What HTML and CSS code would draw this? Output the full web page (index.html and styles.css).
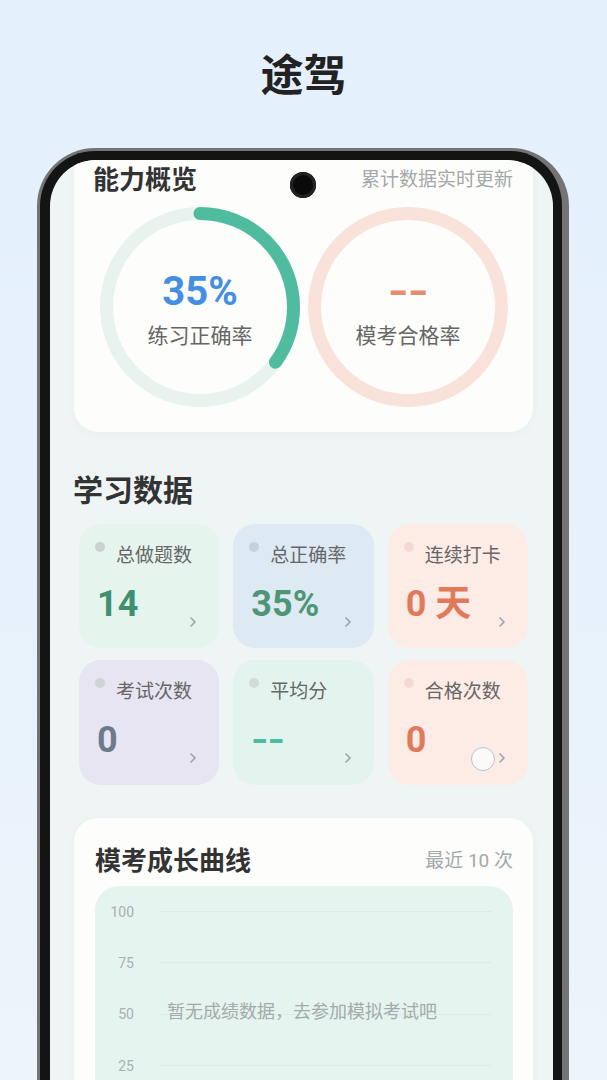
FILE: index.html
```html
<!DOCTYPE html>
<html lang="zh-CN">
<head>
<meta charset="utf-8">
<title>途驾</title>
<link rel="stylesheet" href="styles.css">
</head>
<body>
<header class="brand"><h1>途驾</h1></header>
<div class="phone">
  <div class="screen">
    <div class="camera"></div>
    <div class="content">
      <section class="card ability">
        <div class="card-head">
          <h2>能力概览</h2>
          <span class="hint">累计数据实时更新</span>
        </div>
        <div class="rings">
          <div class="ring">
            <svg viewBox="0 0 200 200" width="200" height="200">
              <circle cx="100" cy="100" r="93.5" fill="none" stroke="#e8f2ee" stroke-width="13"/>
              <circle cx="100" cy="100" r="93.5" fill="none" stroke="#4fbc9f" stroke-width="13" stroke-linecap="round" stroke-dasharray="205.6 600" transform="rotate(-90 100 100)"/>
            </svg>
            <div class="ring-text">
              <div class="ring-val blue">35%</div>
              <div class="ring-label">练习正确率</div>
            </div>
          </div>
          <div class="ring">
            <svg viewBox="0 0 200 200" width="200" height="200">
              <circle cx="100" cy="100" r="93.5" fill="none" stroke="#f8e2da" stroke-width="13"/>
            </svg>
            <div class="ring-text">
              <div class="ring-val orange dash">--</div>
              <div class="ring-label">模考合格率</div>
            </div>
          </div>
        </div>
      </section>

      <h2 class="section-title">学习数据</h2>
      <div class="stats">
        <div class="stat s-green">
          <div class="stat-head"><span class="dot"></span><span class="stat-label">总做题数</span></div>
          <div class="stat-row"><span class="stat-val v-green">14</span><svg class="chev" viewBox="0 0 8 12" width="8" height="12"><polyline points="2,2 6,6 2,10" fill="none" stroke="#9aa3a8" stroke-width="1.6" stroke-linecap="round" stroke-linejoin="round"/></svg></div>
        </div>
        <div class="stat s-blue">
          <div class="stat-head"><span class="dot"></span><span class="stat-label">总正确率</span></div>
          <div class="stat-row"><span class="stat-val v-green2">35%</span><svg class="chev" viewBox="0 0 8 12" width="8" height="12"><polyline points="2,2 6,6 2,10" fill="none" stroke="#9aa3a8" stroke-width="1.6" stroke-linecap="round" stroke-linejoin="round"/></svg></div>
        </div>
        <div class="stat s-peach">
          <div class="stat-head"><span class="dot"></span><span class="stat-label">连续打卡</span></div>
          <div class="stat-row"><span class="stat-val v-orange">0 天</span><svg class="chev" viewBox="0 0 8 12" width="8" height="12"><polyline points="2,2 6,6 2,10" fill="none" stroke="#9aa3a8" stroke-width="1.6" stroke-linecap="round" stroke-linejoin="round"/></svg></div>
        </div>
        <div class="stat s-lav">
          <div class="stat-head"><span class="dot"></span><span class="stat-label">考试次数</span></div>
          <div class="stat-row"><span class="stat-val v-slate">0</span><svg class="chev" viewBox="0 0 8 12" width="8" height="12"><polyline points="2,2 6,6 2,10" fill="none" stroke="#9aa3a8" stroke-width="1.6" stroke-linecap="round" stroke-linejoin="round"/></svg></div>
        </div>
        <div class="stat s-mint">
          <div class="stat-head"><span class="dot"></span><span class="stat-label">平均分</span></div>
          <div class="stat-row"><span class="stat-val v-teal dash-sm">--</span><svg class="chev" viewBox="0 0 8 12" width="8" height="12"><polyline points="2,2 6,6 2,10" fill="none" stroke="#9aa3a8" stroke-width="1.6" stroke-linecap="round" stroke-linejoin="round"/></svg></div>
        </div>
        <div class="stat s-peach">
          <div class="stat-head"><span class="dot"></span><span class="stat-label">合格次数</span></div>
          <div class="stat-row"><span class="stat-val v-orange">0</span><span class="bubble"></span><svg class="chev" viewBox="0 0 8 12" width="8" height="12"><polyline points="2,2 6,6 2,10" fill="none" stroke="#9aa3a8" stroke-width="1.6" stroke-linecap="round" stroke-linejoin="round"/></svg></div>
        </div>
      </div>

      <section class="card chart-card">
        <div class="card-head">
          <h2>模考成长曲线</h2>
          <span class="hint">最近 10 次</span>
        </div>
        <div class="chart">
          <div class="grid-rows">
            <div class="g-row"><span class="y">100</span><span class="g-line"></span></div>
            <div class="g-row"><span class="y">75</span><span class="g-line"></span></div>
            <div class="g-row"><span class="y">50</span><span class="g-line"></span></div>
            <div class="g-row"><span class="y">25</span><span class="g-line"></span></div>
          </div>
          <div class="empty">暂无成绩数据，去参加模拟考试吧</div>
        </div>
      </section>
    </div>
  </div>
</div>
</body>
</html>
```

FILE: styles.css
```css
* { box-sizing: border-box; }
html, body {
  margin: 0;
  height: 1080px;
  overflow: hidden;
}
body {
  background: linear-gradient(180deg, #e4f0fc 0%, #e8f2fb 60%, #edf4fa 100%);
  font-family: Roboto, "Noto Sans CJK SC", sans-serif;
  color: #333;
}
.brand {
  height: 148px;
  display: flex;
  align-items: center;
  justify-content: center;
  padding-bottom: 4px;
}
.brand h1 {
  margin: 0;
  font-family: "Noto Sans CJK SC", sans-serif;
  font-size: 43px;
  font-weight: 700;
  color: #222;
}
.phone {
  margin-left: 37px;
  width: 532px;
  height: 1000px;
  background: #141414;
  border: 3px solid #747474;
  border-right-width: 7px;
  border-bottom: none;
  border-radius: 58px 58px 0 0;
  padding: 9px 9px 0 10px;
}
.screen {
  position: relative;
  width: 503px;
  height: 960px;
  background: #eff5f4;
  border-radius: 46px 46px 0 0;
  overflow: hidden;
}
.camera {
  position: absolute;
  left: 240px;
  top: 12px;
  width: 26px;
  height: 26px;
  border-radius: 50%;
  background: #0a0a0a;
  box-shadow: inset 0 0 0 3px #222;
  z-index: 3;
}
.content {
  padding: 0 20px 0 24px;
}
.card {
  background: #fdfdfc;
  border-radius: 24px;
  box-shadow: 0 2px 8px rgba(120, 150, 150, 0.06);
}
.ability {
  margin-top: -14px;
  padding: 16px 20px 25px 26px;
}
.card-head {
  display: flex;
  align-items: center;
  justify-content: space-between;
  height: 30px;
}
.card-head h2 {
  margin: 0;
  font-family: "Noto Sans CJK SC", sans-serif;
  font-size: 26px;
  font-weight: 700;
  color: #333;
}
.ability .card-head h2 { margin-left: -7px; }
.ability .rings { margin-top: 15px; }
.hint {
  font-size: 19px;
  color: #a3a8a9;
}
.rings {
  display: flex;
  gap: 8px;
}
.ring {
  display: grid;
  width: 200px;
  height: 200px;
}
.ring > * { grid-area: 1 / 1; }
.ring-text {
  display: flex;
  flex-direction: column;
  align-items: center;
  justify-content: center;
  gap: 9px;
  padding-top: 4px;
}
.ring-val {
  font-size: 40px;
  font-weight: 700;
  line-height: 44px;
}
.ring-val.dash {
  letter-spacing: -1px;
  transform: scaleX(1.35);
}
.blue { color: #458fe2; }
.orange { color: #e58c70; }
.ring-label {
  font-size: 21px;
  line-height: 26px;
  color: #666;
}
.section-title {
  margin: 38px 0 0 -1px;
  font-family: "Noto Sans CJK SC", sans-serif;
  font-size: 30px;
  line-height: 36px;
  font-weight: 700;
  color: #333;
}
.stats {
  display: grid;
  grid-template-columns: repeat(3, 1fr);
  column-gap: 14px;
  row-gap: 12px;
  margin: 18px 5px 0 5px;
}
.stat {
  height: 124px;
  border-radius: 22px;
  padding: 18px 0 0 16px;
  display: flex;
  flex-direction: column;
}
.stats .stat:nth-child(n+4) { height: 125px; }
.s-green { background: #e5f5ee; }
.s-blue { background: #dde9f3; }
.s-peach { background: #fdece6; }
.s-lav { background: #e7e5f2; }
.s-mint { background: #e3f4ee; }
.stat-head {
  display: flex;
  align-items: flex-start;
}
.dot {
  width: 10px;
  height: 10px;
  border-radius: 50%;
  background: #cbd1cf;
  flex: none;
}
.s-blue .dot { background: #c7d1db; }
.s-peach .dot { background: #f3d9d1; }
.s-lav .dot { background: #cdd5d8; }
.s-mint .dot { background: #cfdcd7; }
.stat-label {
  margin-left: 11px;
  margin-top: 2px;
  font-size: 19px;
  line-height: 24px;
  color: #666;
}
.stat-row {
  display: flex;
  align-items: flex-end;
  margin-top: 17px;
  padding-right: 22px;
  height: 38px;
}
.stat-val {
  margin-left: 2px;
  font-size: 36px;
  font-weight: 700;
  line-height: 38px;
  margin-right: auto;
}
.stat-val.dash-sm {
  letter-spacing: -1px;
  transform: scaleX(1.25);
  transform-origin: left center;
}
.v-green { color: #3f9070; }
.v-green2 { color: #4c9676; }
.v-orange { color: #e07a5b; }
.v-slate { color: #6c7b8c; }
.v-teal { color: #4dbba0; }
.chev {
  flex: none;
  margin-bottom: -5px;
}
.bubble {
  width: 24px;
  height: 24px;
  border-radius: 50%;
  background: #fbfaf8;
  border: 1.5px solid #b7c3cc;
  margin-right: 3px;
  margin-bottom: -12px;
  flex: none;
}
.chart-card {
  margin-top: 33px;
  padding: 22px 20px 20px 21px;
  height: 400px;
}
.chart-card .card-head { height: 36px; }
.chart {
  margin-top: 10px;
  background: #e4f4ef;
  border-radius: 24px;
  height: 320px;
  display: grid;
  padding: 0 22px 0 14px;
}
.chart > * { grid-area: 1 / 1; }
.grid-rows {
  display: flex;
  flex-direction: column;
}
.g-row {
  height: 51.3px;
  display: flex;
  align-items: center;
}
.y {
  width: 25px;
  text-align: right;
  font-size: 14px;
  color: #a9b0b1;
}
.g-line {
  margin-left: 26px;
  flex: 1;
  height: 1px;
  background: #dcebe6;
}
.empty {
  align-self: start;
  margin-top: 113px;
  margin-left: 58px;
  font-size: 18px;
  line-height: 26px;
  color: #a5aaab;
}
```
